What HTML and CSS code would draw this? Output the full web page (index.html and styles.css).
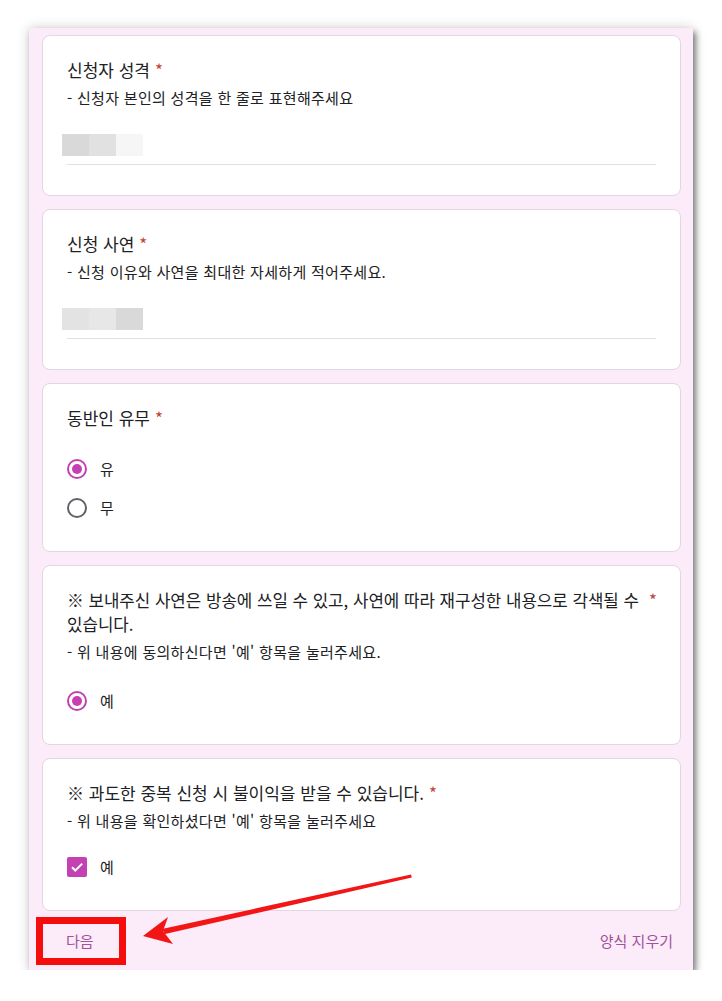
FILE: index.html
```html
<!DOCTYPE html>
<html lang="ko">
<head>
<meta charset="utf-8">
<title>신청서</title>
<link rel="stylesheet" href="styles.css">
</head>
<body>
<div class="frame">
  <div class="card">
    <div class="title"><span class="title-text">신청자 성격</span><span class="req">*</span></div>
    <div class="desc">- 신청자 본인의 성격을 한 줄로 표현해주세요</div>
    <div class="answer">
      <div class="blur"><span class="b1"></span><span class="b2"></span><span class="b3"></span></div>
      <div class="line"></div>
    </div>
  </div>

  <div class="card">
    <div class="title"><span class="title-text">신청 사연</span><span class="req">*</span></div>
    <div class="desc">- 신청 이유와 사연을 최대한 자세하게 적어주세요.</div>
    <div class="answer">
      <div class="blur"><span class="c1"></span><span class="c2"></span><span class="c3"></span></div>
      <div class="line"></div>
    </div>
  </div>

  <div class="card">
    <div class="title"><span class="title-text">동반인 유무</span><span class="req">*</span></div>
    <div class="options">
      <div class="option"><span class="radio on"></span><span class="opt-label">유</span></div>
      <div class="option"><span class="radio"></span><span class="opt-label">무</span></div>
    </div>
  </div>

  <div class="card">
    <div class="title wide"><span class="title-text">※ 보내주신 사연은 방송에 쓰일 수 있고, 사연에 따라 재구성한 내용으로 각색될 수 있습니다.</span><span class="req">*</span></div>
    <div class="desc">- 위 내용에 동의하신다면 '예' 항목을 눌러주세요.</div>
    <div class="options">
      <div class="option"><span class="radio on"></span><span class="opt-label">예</span></div>
    </div>
  </div>

  <div class="card">
    <div class="title"><span class="title-text">※ 과도한 중복 신청 시 불이익을 받을 수 있습니다.</span><span class="req">*</span></div>
    <div class="desc">- 위 내용을 확인하셨다면 '예' 항목을 눌러주세요</div>
    <div class="options checks">
      <div class="option"><span class="check"><svg width="20" height="20" viewBox="0 0 20 20"><path d="M5 10.2l3.3 3.3L15.2 6.6" fill="none" stroke="#fff" stroke-width="2"/></svg></span><span class="opt-label">예</span></div>
    </div>
  </div>

  <div class="footer">
    <span class="next">다음</span>
    <span class="clear">양식 지우기</span>
  </div>

  <div class="highlight"></div>
  <svg class="arrow" width="722" height="1001" viewBox="0 0 722 1001">
    <path d="M411 874.5 L411.8 877.5 L165 934 L162 929 Z" fill="#f21616"/>
    <path d="M143 936 L168 917 L163 931 L173 944 Z" fill="#f21616"/>
  </svg>
</div>
</body>
</html>
```

FILE: styles.css
```css
html, body {
  margin: 0;
  padding: 0;
  background: #ffffff;
}
body {
  padding: 28px 29px 0 29px;
  font-family: "Noto Sans CJK KR", "Noto Sans", sans-serif;
  color: #202124;
}
.frame {
  width: 664px;
  height: 942px;
  box-sizing: border-box;
  background: #fcebf9;
  padding: 7px 12px 0 13px;
  display: flex;
  flex-direction: column;
  gap: 13px;
  box-shadow: 3px 4px 6px rgba(0,0,0,0.45), 0 0 12px rgba(0,0,0,0.18);
}
.card {
  background: #fff;
  border: 1px solid #e3d6e1;
  border-radius: 8px;
  padding: 22px 24px 24px 24px;
}
.title {
  display: flex;
  align-items: flex-start;
  font-size: 17px;
  line-height: 24px;
}
.title-text { flex: 0 1 auto; }
.req {
  color: #c0453a;
  margin-left: 5px;
  flex-shrink: 0;
}
.title.wide { margin-right: -4px; font-size: 16.8px; }
.title.wide .title-text { max-width: 578px; }
.title.wide .req { margin-left: 4px; }
.desc {
  font-size: 15px;
  line-height: 20px;
  letter-spacing: 0.3px;
  margin-top: 6px;
}
.answer {
  margin-top: 26px;
  margin-bottom: 6px;
}
.blur {
  display: flex;
  margin-left: -5px;
  height: 22px;
}
.blur span { width: 27px; height: 22px; }
.b1 { background: #d9d9d9; }
.b2 { background: #e1e1e1; }
.b3 { background: #f6f6f6; }
.c1 { background: #e3e3e3; }
.c2 { background: #e7e7e7; }
.c3 { background: #d9d9d9; }
.line {
  height: 1px;
  background: #e0e0e0;
  margin-top: 8px;
}
.options {
  margin-top: 19px;
  display: flex;
  flex-direction: column;
}
.options.checks { margin-top: 16px; }
.option {
  display: flex;
  align-items: center;
  height: 39px;
}
.radio {
  width: 20px;
  height: 20px;
  box-sizing: border-box;
  border: 2px solid #5f6368;
  border-radius: 50%;
  position: relative;
  flex-shrink: 0;
}
.radio.on { border-color: #c441b4; }
.radio.on::after {
  content: "";
  position: absolute;
  left: 3px;
  top: 3px;
  width: 10px;
  height: 10px;
  border-radius: 50%;
  background: #c441b4;
}
.check {
  width: 20px;
  height: 20px;
  border-radius: 2px;
  background: #c441b4;
  display: block;
  flex-shrink: 0;
}
.check svg { display: block; }
.opt-label {
  font-size: 15px;
  margin-left: 13px;
}
.footer {
  display: flex;
  justify-content: space-between;
  align-items: center;
  font-size: 15px;
  line-height: 20px;
  padding: 7px 8px 0 24px;
  color: #a2529c;
}
.highlight {
  position: absolute;
  left: 36px;
  top: 917px;
  width: 90px;
  height: 48px;
  box-sizing: border-box;
  border: 7px solid #f50d0d;
}
.arrow {
  position: absolute;
  left: 0;
  top: 0;
  pointer-events: none;
}
```
